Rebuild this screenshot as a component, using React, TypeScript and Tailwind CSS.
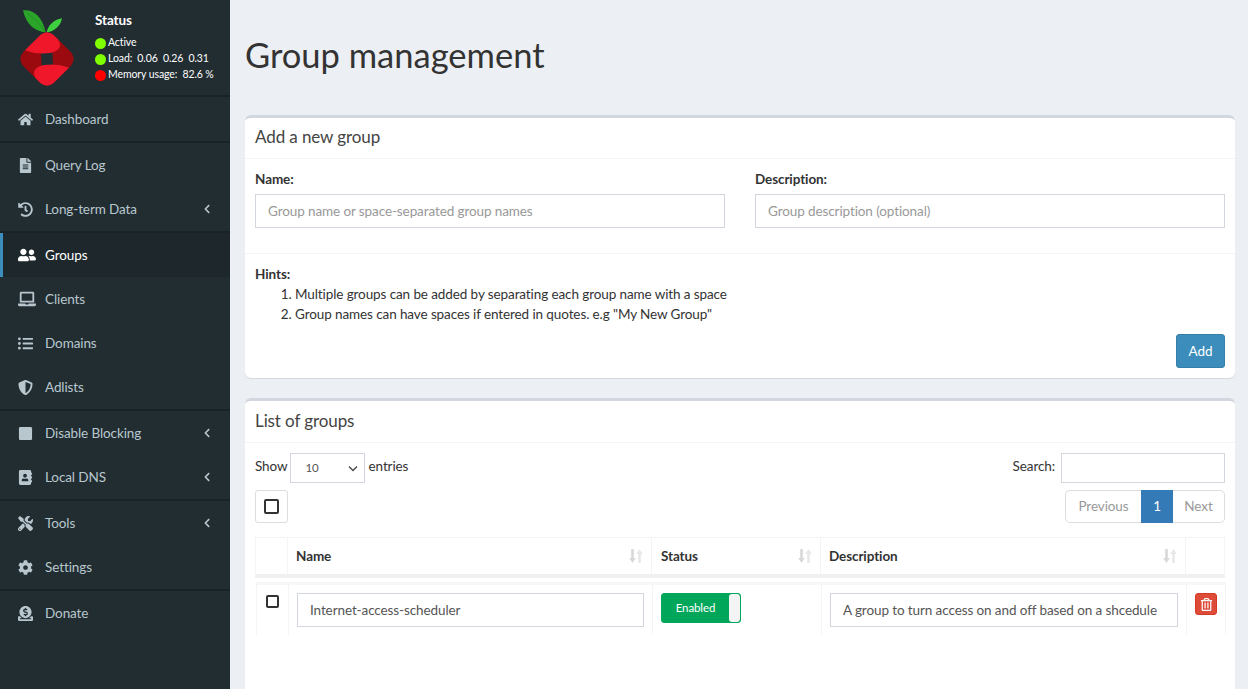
import React from 'react';
import {
  FaHome, FaFileAlt, FaHistory, FaUserFriends, FaLaptop, FaListUl, FaShieldAlt, FaStop,
  FaAddressBook, FaTools, FaCog, FaDonate, FaChevronLeft, FaRegTrashAlt,
} from 'react-icons/fa';

const lobe = 'M30 136 L76 90 Q96 74 116 90 L130 104 Q142 124 126 136 Q112 146 92 145 Q60 148 30 136 Z';

const Logo = () => (
  <svg width="65" height="85" viewBox="0 0 195 255" className="shrink-0">
    <path d="M24 16 C52 12 82 32 92 82 C60 80 34 60 24 16 Z" fill="#2aa52a" />
    <path d="M38 26 C58 40 76 58 90 80" fill="none" stroke="#1d7d1d" strokeWidth="1.5" />
    <path d="M95 82 C100 60 115 45 141 40 C138 60 120 80 95 82 Z" fill="#3fd03f" />
    <path d={lobe} fill="#9a0a0f" transform="rotate(90 96 162)" />
    <path d={lobe} fill="#9a0a0f" transform="rotate(270 96 162)" />
    <path d={lobe} fill="#f0172a" />
    <path d={lobe} fill="#f0172a" transform="rotate(180 96 162)" />
  </svg>
);

const Dot = ({ color }: { color: string }) => (
  <span className={`inline-block w-[11px] h-[11px] rounded-full mr-[2px] shrink-0 ${color}`} />
);

const NavItem = ({ icon: Icon, label, arrow, active, size = 15 }: { icon: any; label: string; arrow?: boolean; active?: boolean; size?: number }) => (
  <a className={`flex items-center h-[44px] border-l-[3px] ${active ? 'border-[#3c8dbc] bg-[#1e282c] text-white' : 'border-transparent text-[#b8c7ce]'}`}>
    <span className="w-[42px] pl-[15px] flex justify-start">
      <Icon size={size} />
    </span>
    <span className="flex-1">{label}</span>
    {arrow && <FaChevronLeft size={10} className="mr-[18px]" />}
  </a>
);

const Divider = () => <div className="h-[2px] bg-[#1a2226]" />;

const SortIcon = () => (
  <svg width="14" height="14" viewBox="0 0 14 14" className="shrink-0">
    <path d="M2.2 0 H4.8 V9 H6.8 L3.5 14 L0.2 9 H2.2 Z" fill="#d8d8d8" />
    <path d="M9.2 14 H11.8 V5 H13.8 L10.5 0 L7.2 5 H9.2 Z" fill="#e8e8e8" />
  </svg>
);

const Box = ({ title, headClass, children }: { title: string; headClass: string; children: React.ReactNode }) => (
  <section className="bg-white border-t-[3px] border-[#d2d6de] rounded-[6px] shadow-[0_1px_1px_rgba(0,0,0,0.1)]">
    <h3 className={`${headClass} px-[10px] pb-[2px] flex items-center text-[17px] text-[#444] border-b border-[#f4f4f4]`}>{title}</h3>
    {children}
  </section>
);

const inputClass = 'block w-full h-[34px] border border-[#d2d6de] px-[12px] text-[#555] bg-white placeholder:text-[#999] outline-none';

const Th = ({ label, w }: { label: string; w: string }) => (
  <div className={`${w} h-full flex items-center justify-between pr-[8px] border-r border-[#f4f4f4] font-bold text-[#333]`}>
    <span>{label}</span>
    <SortIcon />
  </div>
);

export default function App() {
  return (
    <div className="flex h-[689px] overflow-hidden bg-[#ecf0f5] text-[#333] text-[13.5px] tracking-[-0.1px] font-['Lato','Liberation_Sans',sans-serif]">
      <aside className="w-[230px] shrink-0 bg-[#222d32]">
        <div className="h-[95px] flex pl-[15px] pt-[5px]">
          <Logo />
          <div className="ml-[15px] pt-[7px] text-white">
            <p className="text-[13.5px] font-bold leading-[16px] mb-[7px]">Status</p>
            <p className="flex items-center text-[10.5px] h-[16px]"><Dot color="bg-[#7fff00]" />Active</p>
            <p className="flex items-center text-[10.5px] h-[16px] whitespace-pre"><Dot color="bg-[#7fff00]" />Load:  0.06  0.26  0.31</p>
            <p className="flex items-center text-[10.5px] h-[16px] whitespace-pre"><Dot color="bg-[#ff0000]" />Memory usage:  82.6 %</p>
          </div>
        </div>
        <Divider />
        <NavItem icon={FaHome} label="Dashboard" />
        <Divider />
        <NavItem icon={FaFileAlt} label="Query Log" />
        <NavItem icon={FaHistory} label="Long-term Data" arrow />
        <Divider />
        <NavItem icon={FaUserFriends} label="Groups" active size={18} />
        <NavItem icon={FaLaptop} label="Clients" size={18} />
        <NavItem icon={FaListUl} label="Domains" />
        <NavItem icon={FaShieldAlt} label="Adlists" />
        <Divider />
        <NavItem icon={FaStop} label="Disable Blocking" arrow />
        <NavItem icon={FaAddressBook} label="Local DNS" arrow />
        <Divider />
        <NavItem icon={FaTools} label="Tools" arrow />
        <NavItem icon={FaCog} label="Settings" />
        <Divider />
        <NavItem icon={FaDonate} label="Donate" />
      </aside>

      <main className="flex-1 min-w-0 pl-[15px] pr-[13px] pt-[35px]">
        <h1 className="text-[34.5px] leading-[40px] tracking-normal text-[#333] mb-[40px]">Group management</h1>

        <Box title="Add a new group" headClass="h-[41px]">
          <div className="grid grid-cols-2 gap-[30px] px-[10px] pt-[11px] h-[95px] border-b border-[#f4f4f4]">
            <div>
              <label className="block font-bold leading-[18px] mb-[6px]">Name:</label>
              <input className={inputClass} placeholder="Group name or space-separated group names" />
            </div>
            <div>
              <label className="block font-bold leading-[18px] mb-[6px]">Description:</label>
              <input className={inputClass} placeholder="Group description (optional)" />
            </div>
          </div>
          <div className="px-[10px] pt-[10px] pb-[10px] leading-[20px]">
            <strong>Hints:</strong>
            <ol className="list-decimal pl-[40px]">
              <li>Multiple groups can be added by separating each group name with a space</li>
              <li>Group names can have spaces if entered in quotes. e.g "My New Group"</li>
            </ol>
            <div className="flex justify-end mt-[10px]">
              <button className="h-[34px] w-[49px] rounded-[3px] bg-[#3c8dbc] border border-[#367fa9] text-white">Add</button>
            </div>
          </div>
        </Box>

        <div className="mt-[20px]">
          <Box title="List of groups" headClass="h-[42px]">
            <div className="px-[10px] pt-[10px] pb-[100px]">
              <div className="flex justify-between items-center h-[30px]">
                <div className="flex items-center">
                  <span className="pb-[3px]">Show</span>
                  <div className="ml-[2px] mr-[4px] w-[75px] h-[30px] border border-[#d2d6de] flex items-center justify-between pl-[15px] pr-[5px] text-[11.5px] text-[#555]">
                    10
                    <svg width="12" height="12" viewBox="0 0 12 12" fill="none" stroke="#444" strokeWidth="1.3"><path d="M2 4.5 L6 8.5 L10 4.5" /></svg>
                  </div>
                  <span className="pb-[3px]">entries</span>
                </div>
                <div className="flex items-center">
                  <span className="pb-[3px]">Search:</span>
                  <input className="ml-[6px] w-[164px] h-[30px] border border-[#d2d6de] outline-none" />
                </div>
              </div>
              <div className="flex justify-between items-start mt-[7px] h-[34px]">
                <button className="w-[33px] h-[33px] rounded-[3px] border border-[#ddd] flex items-center justify-center">
                  <span className="block w-[15px] h-[15px] border-2 border-[#333] rounded-[2px]" />
                </button>
                <div className="flex h-[33px] text-[#999]">
                  <span className="w-[76px] border border-[#ddd] rounded-l-[5px] flex items-center justify-center border-r-0">Previous</span>
                  <span className="w-[32px] bg-[#337ab7] text-white flex items-center justify-center">1</span>
                  <span className="w-[52px] border border-[#ddd] rounded-r-[5px] flex items-center justify-center border-l-0">Next</span>
                </div>
              </div>
              <div className="mt-[13px]">
                <div className="flex h-[41px] border-t border-l border-r border-[#f4f4f4] border-b-[4px] border-b-[#f0f0f0]">
                  <div className="w-[32px] border-r border-[#f4f4f4]" />
                  <Th label="Name" w="w-[364px] pl-[8px]" />
                  <Th label="Status" w="w-[169px] pl-[9px]" />
                  <Th label="Description" w="w-[365px] pl-[8px]" />
                  <div className="flex-1" />
                </div>
                <div className="flex h-[53px] ml-[1px] mr-[-1px] mt-[4px] border-t-[3px] border-[#f7f7f7] border-l border-r border-l-[#f4f4f4] border-r-[#f4f4f4]">
                  <div className="w-[32px] border-r border-[#f4f4f4] flex justify-center pt-[10px]">
                    <span className="block w-[13px] h-[13px] border-2 border-[#333] rounded-[2px]" />
                  </div>
                  <div className="w-[364px] border-r border-[#f4f4f4] pl-[8px] pr-[8px] pt-[8px]">
                    <input className={inputClass} defaultValue="Internet-access-scheduler" />
                  </div>
                  <div className="w-[169px] border-r border-[#f4f4f4] pl-[8px] pt-[8px]">
                    <div className="w-[80px] h-[30px] rounded-[3px] border border-[#00a65a] bg-[#00a65a] flex overflow-hidden">
                      <span className="flex-1 flex items-center justify-center text-white text-[11.5px]">Enabled</span>
                      <span className="w-[11px] bg-[#f4f4f4] rounded-[3px]" />
                    </div>
                  </div>
                  <div className="w-[365px] border-r border-[#f4f4f4] pl-[8px] pr-[8px] pt-[8px]">
                    <input className={inputClass} defaultValue="A group to turn access on and off based on a shcedule" />
                  </div>
                  <div className="flex-1 flex justify-start pl-[8px] pt-[8px]">
                    <button className="w-[22px] h-[22px] rounded-[3px] bg-[#dd4b39] border border-[#d73925] text-white flex items-center justify-center">
                      <FaRegTrashAlt size={13} />
                    </button>
                  </div>
                </div>
              </div>
            </div>
          </Box>
        </div>
      </main>
    </div>
  );
}
